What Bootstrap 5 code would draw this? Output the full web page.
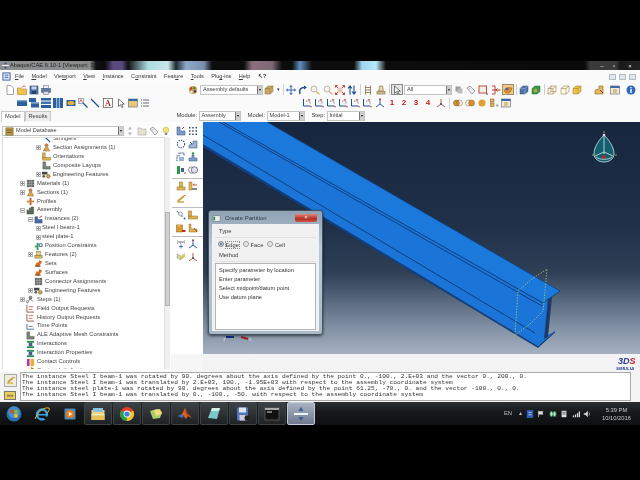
<!DOCTYPE html>
<html lang="en">
<head>
<meta charset="UTF-8">
<title>Abaqus/CAE</title>
<link rel="stylesheet" href="https://cdn.jsdelivr.net/npm/bootstrap@5.3.0/dist/css/bootstrap.min.css">
<style>
html, body { margin: 0; width: 640px; height: 480px; overflow: hidden; background: #000; }
.shot { width: 640px; height: 480px; font-family: "Liberation Sans", Arial, sans-serif; font-size: 5.8px; line-height: 1; color: #3a3a3a; filter: blur(.3px); }
.black-top { height: 61px; background: #000; }
.titlebar { height: 9px; padding-left: 2px; background: linear-gradient(90deg, #8f9091 0, #8a8b8c 90px, #101010 96px, #0b0b0b 105px, #5a4a80 113px, #5a4a80 122px, #111 128px, #a9dbe2 148px, #c9e6ea 168px, #1a2a30 176px, #8fa8c8 186px, #7a8fb0 204px, #0c0c0c 212px, #0c0c0c 244px, #8c6f7c 252px, #806a78 272px, #0c0c0c 282px, #0c0c0c 292px, #5f8fc0 300px, #0c0c0c 312px, #0c0c0c 354px, #9cd6f0 362px, #b8e6f8 376px, #0c0c0c 386px, #0a0a0a 585px, #3a3a3a 590px, #3a3a3a 616px, #1a1a1a 620px, #222 636px); color: #222; }
.titlebar .win-btn { width: 12px; color: #eee; text-align: center; font-size: 6px; }
.app-logo { width: 7px; height: 7px; margin-right: 1px; }
.menubar { height: 13px; background: #fbfbfb; padding-left: 2px; gap: 0; }
.menubar .mi { margin-right: 7.4px; font-size: 5.6px; }
.menubar .mi u { text-underline-offset: 1px; }
.mdi-btn { width: 7px; height: 6px; margin-left: 3px; background: #dfe6ee; border: 1px solid #b4bcc6; }
.tb-row { height: 13.5px; background: #fafafa; }
.slot { flex: 0 0 12px; width: 12px; height: 11px; display: flex; align-items: center; justify-content: center; }
.slot svg, .tree-ico svg { width: 10px; height: 10px; display: block; }
.slot.hot { background: #f5c98a; outline: 1px solid #9a8a70; outline-offset: -1px; }
.slot.boxed { background: #e3e3e3; outline: 1px solid #8a8a8a; outline-offset: -1px; }
.view-num { font-size: 8px; font-weight: 700; color: #c3201a; }
.tb-sep { flex: 0 0 4px; height: 11px; position: relative; }
.tb-sep::after { content: ""; display: block; width: 1px; height: 100%; margin: 0 auto; background: #cfcfcf; }
.dd { flex: 0 0 6px; text-align: center; font-size: 5px; color: #333; }
.ml1 { margin-left: 1px; }
.ml135 { margin-left: 135px; }
.ml150 { margin-left: 150px; }
.ml10 { margin-left: 10px; }
.ml4 { margin-left: 4px; }
.pl16 { padding-left: 16px; }
.combo { height: 10px; background: #fff; border: 1px solid #c4c4c4; padding-left: 2px; color: #444; font-size: 5.6px; }
.combo i { margin-left: auto; width: 5px; height: 100%; background: #cfcfcf; border-left: 1px solid #777; color: #111; font-style: normal; font-size: 4px; text-align: center; line-height: 8px; }
.w63 { width: 63px; flex: none; }
.w48 { width: 48px; flex: none; }
.w42 { width: 42px; flex: none; }
.w38 { width: 38px; flex: none; }
.w122 { width: 122px; flex: none; }
.row3 { height: 12px; background: #fafafa; align-items: flex-end; }
.tabbtn { height: 11px; padding: 2px 3px 0; border: 1px solid #c8c8c8; border-bottom: 0; background: #fff; font-size: 5.7px; }
.tabbtn.off { background: #ececec; margin-left: 0; height: 10px; }
.module-bar { margin-left: 125px; gap: 7px; height: 12px; align-items: center; }
.module-bar .lab { margin-right: 1.5px; font-size: 5.8px; }
.work { height: 250px; background: #f6f6f6; }
.left-panel { width: 171px; flex: none; padding: 3px 0 0 2px; background: #fdfdfd; }
.db-row { height: 12px; }
.tree-box { width: 162px; height: 232px; position: relative; overflow: hidden; background: #fff; border: 1px solid #dcdcdc; border-right: 0; border-bottom: 0; }
.tree-rows { margin: -3.5px 0 0; padding: 0; list-style: none; }
.tree-rows li { height: 8.93px; display: flex; align-items: center; white-space: nowrap; font-size: 5.8px; color: #444; }
.tree-ico { width: 9px; height: 9px; margin-right: 2px; flex: none; }
.tree-ico svg { width: 9px; height: 9px; }
.exp { width: 5px; height: 5px; margin-right: 1px; border: 1px solid #b5b5b5; flex: none; position: relative; background: #fff; }
.exp::before { content: ""; position: absolute; left: 0; right: 0; top: 1px; height: 1px; background: #888; }
.exp.plus::after { content: ""; position: absolute; top: 0; bottom: 0; left: 1px; width: 1px; background: #888; }
.no-exp { width: 6px; flex: none; }
.d0 { padding-left: 17px; }
.d1 { padding-left: 25px; }
.d2 { padding-left: 33px; }
.scroll-col { width: 6px; flex: none; background: #f0f0f0; border-left: 1px solid #ddd; }
.scroll-thumb { width: 100%; height: 94px; margin-top: 75px; background: #cfcfcf; border: 1px solid #b5b5b5; }
.palette { width: 32px; flex: none; padding: 2px 0 0 4px; background: #fff; height: 232px; }
.pal-grid { display: grid; grid-template-columns: 12px 12px; }
.pal-grid .slot { height: 13px; }
.pal-sep { grid-column: span 2; height: 3px; border-bottom: 1px solid #bdbdbd; margin-left: -3px; margin-right: -4px; }
.right-col { flex: 1; }
.viewport3d { height: 232px; position: relative; overflow: hidden; background: linear-gradient(180deg, #16263f 0, #1f3048 45%, #2e3f56 65%, #7f8ea2 88%, #a5b1c0 100%); }
.viewport3d > svg { display: block; }
.dlg { position: absolute; left: 5px; top: 88px; width: 115px; height: 125px; padding: 13px 3px 3px; background: linear-gradient(180deg, #8fa2b4, #b8c8d6 30%, #a8bac9); border: 1px solid #45525e; border-radius: 3px; box-shadow: 0 1px 3px rgba(0,0,0,.6); }
.dlg-title { position: absolute; left: 3px; top: 3px; right: 3px; height: 8px; color: #2e3a44; font-size: 6px; }
.dlg-close { position: absolute; right: 2px; top: 0; width: 22px; height: 8px; border-radius: 0 0 2px 2px; background: linear-gradient(180deg, #d98a80, #b92c20 60%, #c9564a); color: #fff; text-align: center; font-size: 6px; line-height: 7px; }
.dlg-body { height: 100%; background: #f1f1f1; padding: 3px; }
.legend-lab { height: 9px; padding-left: 4px; margin-top: 2px; font-size: 5.8px; border-bottom: 1px solid #e2e2e2; }
.radio-row { height: 13px; padding-left: 3px; gap: 4px; align-items: center; font-size: 5.8px; }
.rad { width: 6px; height: 6px; border-radius: 50%; border: 1px solid #9a9a9a; background: #e8e8e8; margin-right: 1.5px; flex: none; display: inline-block; }
.rad.on { background: #2e6c9e; box-shadow: inset 0 0 0 1px #dbe8f2; }
.focus-lab { outline: 1px dotted #888; }
.method-box { height: 67px; margin-top: 1px; padding: 2px 2px; background: #fff; border: 1px solid #b5b5b5; }
.method-box .list-group-item { padding: 0 0 0 1px; height: 9px; line-height: 9px; border: 0; background: transparent; color: #333; font-size: 5.7px; }
.strip { height: 18px; background: #f3f3f3; padding-right: 1px; }
.simulia { width: 26px; height: 17px; }
.msg-row { height: 30px; background: #f4f4f4; padding-left: 4px; }
.msg-icons { width: 16px; flex: none; }
.msg-i { width: 13px; height: 13px; margin-top: 2px; background: #efeedd; border: 1px solid #aaa; }
.msg-y { width: 12px; height: 9px; margin-top: 4px; background: #eccf5a; border: 1px solid #777; color: #333; font-size: 6px; line-height: 6px; text-align: center; }
.msg-box { width: 611px; height: 29px; flex: none; background: #fff; border: 1px solid #aaa; padding: 1px 0 0 1px; font-family: "Liberation Mono", "Courier New", monospace; font-size: 6.2px; line-height: 6.1px; color: #333; overflow: hidden; white-space: pre; }
.taskbar { height: 23px; background: linear-gradient(180deg, #2a2e31, #16191b 45%, #0d0f10); color: #ccc; }
.task-btn { width: 28px; height: 23px; margin-right: 1px; display: flex; align-items: center; justify-content: center; border: 1px solid #3e4347; border-radius: 2px; background: linear-gradient(180deg, #3d4246, #1f2224); }
.task-btn.active { background: linear-gradient(180deg, #a8b2c2, #6f7b8e); border-color: #c4ccd6; }
.task-plain { width: 28px; height: 23px; display: flex; align-items: center; justify-content: center; }
.task-btn svg, .task-plain svg { width: 16px; height: 16px; }
.tray { margin-left: auto; gap: 3.5px; padding-right: 9px; align-items: center; color: #bbb; }
.tray svg { width: 8px; height: 8px; }
.clock { text-align: center; font-size: 5.8px; line-height: 8px; color: #c8c8c8; margin-left: 7px; }
.lang { font-size: 5.8px; margin-right: 4px; }
.black-bot { height: 55px; background: #000; }
</style>
</head>
<body>
<svg width="0" height="0" class="d-block position-absolute">
<defs>
<symbol id="i-new" viewBox="0 0 10 10"><path d="M2 .5h4l2.500 2.500v6.500h-6.500z" fill="#fff" stroke="#8a8a8a" stroke-width=".8"/></symbol>
<symbol id="i-open" viewBox="0 0 10 10"><path d="M.5 3h3l1 1h5v5.500h-9z" fill="#f0c24e" stroke="#b5842a" stroke-width=".6"/><path d="M5 2.500c1-1.800 2.500-1.800 3.500-.8" fill="none" stroke="#d4502a" stroke-width="1"/></symbol>
<symbol id="i-save" viewBox="0 0 10 10"><rect x="1" y="1" width="8" height="8" fill="#4a6fa8" stroke="#2d4a78" stroke-width=".6"/><rect x="2.500" y="1.500" width="5" height="3" fill="#c8d4e6"/><rect x="3" y="6" width="4" height="3" fill="#25406c"/></symbol>
<symbol id="i-print" viewBox="0 0 10 10"><rect x="2.500" y=".5" width="5" height="3" fill="#eef" stroke="#667" stroke-width=".5"/><rect x=".5" y="3.500" width="9" height="4" fill="#5f78a6" stroke="#3c4f74" stroke-width=".5"/><rect x="2.500" y="6.500" width="5" height="3" fill="#dde" stroke="#667" stroke-width=".5"/></symbol>
<symbol id="i-paint" viewBox="0 0 10 10"><circle cx="5" cy="5" r="4" fill="#c8a050"/><circle cx="3" cy="3.500" r="1.200" fill="#d33"/><circle cx="6.500" cy="3" r="1.200" fill="#3a8a3a"/><circle cx="7" cy="6.500" r="1.200" fill="#336"/><circle cx="3.500" cy="7" r="1.200" fill="#eee"/></symbol>
<symbol id="i-cube" viewBox="0 0 10 10"><path d="M1 3.500l3-2.500h5v5.500l-3 2.500h-5z" fill="#c8a860" stroke="#8a7038" stroke-width=".5"/><path d="M1 3.500h5v5.500M6 3.500l3-2.500" fill="none" stroke="#8a7038" stroke-width=".5"/></symbol>
<symbol id="i-cubey" viewBox="0 0 10 10"><path d="M1 3.500l3-2.500h5v5.500l-3 2.500h-5z" fill="#edc24a" stroke="#9a7a20" stroke-width=".5"/><path d="M1 3.500h5v5.500M6 3.500l3-2.500" fill="none" stroke="#9a7a20" stroke-width=".5"/></symbol>
<symbol id="i-wire" viewBox="0 0 10 10"><path d="M1 3.500l3-2.500h5v5.500l-3 2.500h-5zM1 3.500h5v5.500M6 3.500l3-2.500M4 1v5.500h5M4 6.500l-3 2.500" fill="#fff8e8" stroke="#9a8450" stroke-width=".6"/></symbol>
<symbol id="i-box" viewBox="0 0 10 10"><path d="M1 3.500l3-2.500h5v5.500l-3 2.500h-5zM1 3.500h5v5.500M6 3.500l3-2.500" fill="#fff8e8" stroke="#9a8450" stroke-width=".6"/></symbol>
<symbol id="i-bcube" viewBox="0 0 10 10"><path d="M1 3.500l3-2.500h5v5.500l-3 2.500h-5z" fill="#4f74a8" stroke="#2d4a78" stroke-width=".5"/><path d="M1 3.500h5v5.500M6 3.500l3-2.500" fill="none" stroke="#a8bcd8" stroke-width=".5"/></symbol>
<symbol id="i-gcube" viewBox="0 0 10 10"><path d="M1 3.500l3-2.500h5v5.500l-3 2.500h-5z" fill="#3d9a4a" stroke="#206a2c" stroke-width=".5"/><circle cx="4.500" cy="5.500" r="1.800" fill="#c8a040"/></symbol>
<symbol id="i-move" viewBox="0 0 10 10"><path d="M5 .5v9M.5 5h9M5 .5l-1.300 1.600M5 .5l1.300 1.600M5 9.500l-1.300-1.600M5 9.500l1.300-1.600M.5 5l1.600-1.300M.5 5l1.600 1.300M9.500 5l-1.600-1.300M9.500 5l-1.600 1.300" fill="none" stroke="#2a5ea8" stroke-width=".9"/></symbol>
<symbol id="i-rot" viewBox="0 0 10 10"><path d="M2 9c-1.500-4 1-7 5-6.500" fill="none" stroke="#1f4e96" stroke-width="1.500"/><path d="M6 .5l3 2-3 2z" fill="#1f4e96"/></symbol>
<symbol id="i-mag" viewBox="0 0 10 10"><circle cx="4" cy="4" r="3" fill="#f6f1e2" stroke="#aaa" stroke-width=".8"/><path d="M6 6l3.500 3.500" stroke="#d6b878" stroke-width="1.500"/></symbol>
<symbol id="i-fit" viewBox="0 0 10 10"><rect x="2.500" y="2.500" width="5" height="5" fill="#e8c8b8"/><path d="M.5 .5l2.500 2.500M9.500 .5l-2.500 2.500M.5 9.500l2.500-2.500M9.500 9.500l-2.500-2.500M.5 .5h2M.5 .5v2M9.500 .5h-2M9.500 .5v2M.5 9.500h2M.5 9.500v-2M9.500 9.500h-2M9.500 9.500v-2" stroke="#c22a1a" fill="none" stroke-width=".9"/></symbol>
<symbol id="i-ud" viewBox="0 0 10 10"><path d="M3 9.500v-8M1 3.500l2-2.500 2 2.500M7 .5v8M5 6.500l2 2.500 2-2.500" stroke="#1f4e96" fill="none" stroke-width="1.100"/></symbol>
<symbol id="i-udg" viewBox="0 0 10 10"><path d="M5 .5l2 3H3zM5 9.500l2-3H3z" fill="#b5b5b5"/></symbol>
<symbol id="i-ladder" viewBox="0 0 10 10"><path d="M2.500 .5v9M7.500 .5v9M2.500 2.500h5M2.500 5h5M2.500 7.500h5" stroke="#8a7a50" stroke-width=".9" fill="none"/></symbol>
<symbol id="i-stamp" viewBox="0 0 10 10"><path d="M3.500 1h3l.8 5h-4.600z" fill="#e8d8b0" stroke="#8a7a50" stroke-width=".7"/><rect x="1" y="6.500" width="8" height="2.500" fill="#d0c090" stroke="#8a7a50" stroke-width=".7"/></symbol>
<symbol id="i-arrowbox" viewBox="0 0 10 10"><path d="M2.500 1v7.500l2-1.800 1.300 2.800 1.200-.6-1.300-2.700h2.600z" fill="#f2f2f2" stroke="#444" stroke-width=".7"/></symbol>
<symbol id="i-gray" viewBox="0 0 10 10"><rect x="1.500" y="1.500" width="5" height="5" fill="#999"/><rect x="3.500" y="3.500" width="5" height="5" fill="#bbb"/></symbol>
<symbol id="i-graypick" viewBox="0 0 10 10"><path d="M1 3l3-2 5 5-3 3z" fill="#eee" stroke="#888" stroke-width=".8"/><path d="M2.500 4.500l3-2 3 3" fill="none" stroke="#aaa" stroke-width=".6"/></symbol>
<symbol id="i-redbox" viewBox="0 0 10 10"><rect x="1" y="1" width="7.500" height="7" fill="#f7f2e8" stroke="#b93a2a" stroke-width=".9"/><circle cx="9" cy="9" r=".8" fill="#333"/></symbol>
<symbol id="i-redarr" viewBox="0 0 10 10"><path d="M1 1h3v8h-3M1 5h4M9 5h-3M5 5l1.500-1.500M5 5l1.500 1.500" stroke="#b92a1a" fill="none" stroke-width=".9"/><rect x="7.500" y="4" width="2" height="2" fill="#c8a050"/></symbol>
<symbol id="i-hot" viewBox="0 0 10 10"><path d="M1 6c1-3 4-4 8-3-1 2-1 5-4 5s-3-1-4-2z" fill="#e8902a" stroke="#8a5a1a" stroke-width=".6"/><circle cx="4" cy="4" r="1.500" fill="#3a6ab0"/></symbol>
<symbol id="i-info" viewBox="0 0 10 10"><circle cx="5" cy="5" r="4.500" fill="#2f68b8"/><rect x="4.300" y="4" width="1.400" height="4" fill="#fff"/><rect x="4.300" y="2" width="1.400" height="1.300" fill="#fff"/></symbol>
<symbol id="i-pen" viewBox="0 0 10 10"><path d="M1 9V5l4-1V1h4v8z" fill="#e0b860" stroke="#8a6a28" stroke-width=".6"/><path d="M6 5l3 3" stroke="#c22a1a"/></symbol>
<symbol id="i-table" viewBox="0 0 10 10"><rect x=".5" y="1" width="9" height="8" fill="#f0ead8" stroke="#6a7a8a" stroke-width=".7"/><rect x=".5" y="1" width="9" height="2" fill="#3a68a8"/><path d="M3 5h4M3 7h4" stroke="#b8902a" stroke-width=".9"/></symbol>
<symbol id="i-bars" viewBox="0 0 10 10"><rect x="0" y="2" width="10" height="6" fill="#2b5f9e"/><rect x="0" y="2" width="10" height="1.400" fill="#7da4d2"/></symbol>
<symbol id="i-bars2" viewBox="0 0 10 10"><rect x="0" y="0" width="7" height="4" fill="#2b5f9e"/><rect x="2" y="4.500" width="8" height="5" fill="#2b5f9e"/><rect x="2" y="4.500" width="8" height="1.200" fill="#7da4d2"/></symbol>
<symbol id="i-bars3" viewBox="0 0 10 10"><rect x="0" y="0" width="10" height="2.500" fill="#2b5f9e"/><rect x="0" y="3.500" width="10" height="2.500" fill="#3d74b4"/><rect x="0" y="7" width="10" height="3" fill="#2b5f9e"/></symbol>
<symbol id="i-bars4" viewBox="0 0 10 10"><rect x="0" y="0" width="3" height="10" fill="#2b5f9e"/><rect x="3.500" y="0" width="3" height="10" fill="#3d74b4"/><rect x="7" y="0" width="3" height="10" fill="#2b5f9e"/></symbol>
<symbol id="i-eye" viewBox="0 0 10 10"><rect x=".5" y="2" width="9" height="6" fill="#2b5f9e"/><ellipse cx="5" cy="5" rx="3.500" ry="2" fill="#e8b040"/></symbol>
<symbol id="i-magline" viewBox="0 0 10 10"><rect x=".5" y=".5" width="5" height="5" fill="#eee" stroke="#6a7a9a" stroke-width=".6"/><path d="M1.500 4.500l1.500-3 1.500 3" fill="none" stroke="#c22a1a" stroke-width=".6"/><path d="M5 5l4.500 4.500" stroke="#1f4e96" stroke-width="1.300"/></symbol>
<symbol id="i-line" viewBox="0 0 10 10"><path d="M1 1l8 8" stroke="#1f4e96" stroke-width="1.300"/></symbol>
<symbol id="i-Abox" viewBox="0 0 10 10"><rect x=".5" y=".5" width="9" height="9" fill="#fff" stroke="#555" stroke-width=".7"/><text x="5" y="8" text-anchor="middle" font-family="Liberation Serif, serif" font-size="8" font-weight="700" fill="#b3261a">A</text></symbol>
<symbol id="i-cur" viewBox="0 0 10 10"><path d="M2.500 1v7.500l2-1.800 1.300 2.800 1.200-.6-1.300-2.700h2.600z" fill="#fff" stroke="#444" stroke-width=".7"/></symbol>
<symbol id="i-pnl" viewBox="0 0 10 10"><rect x=".5" y="1" width="9" height="8" fill="#e8c87a" stroke="#5a6a7a" stroke-width=".6"/><rect x=".5" y="1" width="9" height="2" fill="#3a68a8"/></symbol>
<symbol id="i-dlg" viewBox="0 0 10 10"><rect x="1" y="2" width="8" height="6" fill="#eef2e8" stroke="#5a6a7a" stroke-width=".6"/><rect x="1.500" y="3" width="2" height="4" fill="#3a8a5a"/></symbol>
<symbol id="i-lines" viewBox="0 0 10 10"><path d="M3 2h6M3 5h6M3 8h6" stroke="#667" stroke-width="1"/><path d="M1 2h1M1 5h1M1 8h1" stroke="#2b5f9e" stroke-width="1"/></symbol>
<symbol id="i-xy" viewBox="0 0 10 10"><path d="M1.500 1v7h7" fill="none" stroke="#1f4e96" stroke-width="1"/><path d="M4 3h4v3" fill="none" stroke="#333" stroke-dasharray="1 .6" stroke-width=".6"/><path d="M6 1l1 1.500M8 1l-1 1.500" stroke="#c22a1a" stroke-width=".7"/><circle cx="9" cy="8.800" r=".7" fill="#c22a1a"/></symbol>
<symbol id="i-axis" viewBox="0 0 10 10"><path d="M5 1v5M5 6l-4 3M5 6l4 3" stroke="#2a5ea8" fill="none" stroke-width="1"/><circle cx="5" cy="1.200" r=".9" fill="#c22a1a"/></symbol>
<symbol id="i-axr" viewBox="0 0 10 10"><path d="M5 1v5M5 6l-4 3M5 6l4 3" stroke="#c25a3a" fill="none" stroke-width="1"/><circle cx="5" cy="6" r=".9" fill="#1f4e96"/></symbol>
<symbol id="i-ball2" viewBox="0 0 10 10"><circle cx="3.500" cy="5" r="3" fill="#d89030" stroke="#7a5a2a" stroke-width=".5"/><circle cx="6.500" cy="5" r="3" fill="none" stroke="#7a5a2a" stroke-width=".5"/></symbol>
<symbol id="i-ball3" viewBox="0 0 10 10"><circle cx="3.500" cy="5" r="3" fill="none" stroke="#7a5a2a" stroke-width=".5"/><circle cx="6.500" cy="5" r="3" fill="#d89030" stroke="#7a5a2a" stroke-width=".5"/></symbol>
<symbol id="i-ball" viewBox="0 0 10 10"><circle cx="5" cy="5" r="3.500" fill="#e0a030"/></symbol>
<symbol id="i-stack" viewBox="0 0 10 10"><rect x="1.500" y="1" width="3.500" height="3" fill="#e0b050" stroke="#7a5a2a" stroke-width=".5"/><rect x="1.500" y="5" width="3.500" height="3.500" fill="#e0b050" stroke="#7a5a2a" stroke-width=".5"/><rect x="7" y="6.500" width="2.500" height="2" fill="#aaa"/></symbol>
<symbol id="i-part" viewBox="0 0 10 10"><path d="M1 9V1h3v4h5v4z" fill="#7a9cc6" stroke="#44618c" stroke-width=".6"/><path d="M6 3l2-2" stroke="#c22a1a"/></symbol>
<symbol id="i-dots" viewBox="0 0 10 10"><g fill="#2f4a78"><rect x="1" y="1" width="1.500" height="1.500"/><rect x="4.200" y="1" width="1.500" height="1.500"/><rect x="7.500" y="1" width="1.500" height="1.500"/><rect x="1" y="4.200" width="1.500" height="1.500"/><rect x="4.200" y="4.200" width="1.500" height="1.500"/><rect x="7.500" y="4.200" width="1.500" height="1.500"/><rect x="1" y="7.500" width="1.500" height="1.500"/><rect x="4.200" y="7.500" width="1.500" height="1.500"/><rect x="7.500" y="7.500" width="1.500" height="1.500"/></g></symbol>
<symbol id="i-ring" viewBox="0 0 10 10"><circle cx="5" cy="5" r="3.700" fill="none" stroke="#2f4a78" stroke-width="1.100" stroke-dasharray="1.400 1"/></symbol>
<symbol id="i-blup" viewBox="0 0 10 10"><path d="M1 9V6l4-1V2h4v7z" fill="#9ab4d4" stroke="#44618c" stroke-width=".6"/><path d="M2 3l2 2" stroke="#1f4e96"/></symbol>
<symbol id="i-step" viewBox="0 0 10 10"><path d="M1 9V4h2V1h5v3" fill="none" stroke="#44618c" stroke-width="1.100" stroke-dasharray="1.500 .7"/><rect x="3" y="5" width="5" height="4" fill="#9ab4d4"/></symbol>
<symbol id="i-pin" viewBox="0 0 10 10"><path d="M1 9V6h3V3h2v3h3v3z" fill="#7a9cc6" stroke="#44618c" stroke-width=".6"/><circle cx="5" cy="1.500" r="1.300" fill="#2a9a4a"/></symbol>
<symbol id="i-green" viewBox="0 0 10 10"><rect x="1" y="1" width="3" height="8" fill="#2a9a4a"/><rect x="5" y="3" width="3" height="4" fill="#44618c"/><circle cx="9" cy="8" r=".8" fill="#c22a1a"/></symbol>
<symbol id="i-rings" viewBox="0 0 10 10"><circle cx="3.800" cy="5" r="3.200" fill="none" stroke="#667" stroke-width=".8"/><circle cx="6.500" cy="5" r="3.200" fill="#dde" stroke="#667" stroke-width=".8"/></symbol>
<symbol id="i-load" viewBox="0 0 10 10"><rect x="3.500" y="1" width="3" height="5" fill="#e0b850" stroke="#8a6a28" stroke-width=".5"/><rect x="1" y="6" width="8" height="3" fill="#e0b850" stroke="#8a6a28" stroke-width=".5"/></symbol>
<symbol id="i-loadr" viewBox="0 0 10 10"><rect x="1" y="1" width="3" height="8" fill="#e0b850" stroke="#8a6a28" stroke-width=".5"/><path d="M5 4h4M5 4l1.500-1.200" stroke="#c22a1a" fill="none" stroke-width=".8"/><rect x="4" y="7" width="5" height="2" fill="#888"/></symbol>
<symbol id="i-wand" viewBox="0 0 10 10"><rect x="1" y="7" width="7" height="2" fill="#d8c070"/><path d="M2 7l6-5" stroke="#c8a040" stroke-width="2"/><path d="M8.500 1l.8 1" stroke="#c22a1a"/></symbol>
<symbol id="i-lnk" viewBox="0 0 10 10"><path d="M1 1l6 6" stroke="#5a7a9a" stroke-width="1.200" stroke-dasharray="1.500 .6"/><circle cx="4.500" cy="4" r="2" fill="#eee" stroke="#667" stroke-width=".5"/><circle cx="8.500" cy="8.500" r=".9" fill="#2a5ea8"/></symbol>
<symbol id="i-org" viewBox="0 0 10 10"><rect x=".5" y="6" width="9" height="3" fill="#e0b050" stroke="#8a6a28" stroke-width=".5"/><rect x=".5" y="1" width="3" height="5" fill="#e0b050" stroke="#8a6a28" stroke-width=".5"/></symbol>
<symbol id="i-orgr" viewBox="0 0 10 10"><rect x=".5" y="2" width="6" height="7" fill="#d89a30" stroke="#8a5a28" stroke-width=".5"/><rect x="2" y="1" width="2" height="3" fill="#e0c060"/><rect x="6" y="7" width="3.500" height="2" fill="#c22a1a"/></symbol>
<symbol id="i-orgb" viewBox="0 0 10 10"><path d="M1 1h2v5h6v3H1z" fill="#e0b050" stroke="#8a6a28" stroke-width=".5"/><path d="M6 5l3 4" stroke="#c22a1a" stroke-width=".8"/></symbol>
<symbol id="i-ppp" viewBox="0 0 10 10"><text x="5" y="4" text-anchor="middle" font-size="3.600" font-family="Liberation Sans, sans-serif" fill="#333">(xyz)</text><path d="M5 5.500v4M3 7.500h4" stroke="#2a5ea8" stroke-width=".8"/></symbol>
<symbol id="i-datum" viewBox="0 0 10 10"><path d="M1 2l4 2 0 4-4-2z" fill="#cdd6a8" stroke="#333" stroke-width=".4" stroke-dasharray=".8 .5"/><path d="M5 4l4-3v4l-4 3z" fill="#d8c868"/></symbol>
<symbol id="i-folder" viewBox="0 0 10 10"><path d="M1 2h3l1 1h4v6H1z" fill="#e6e2d2" stroke="#aaa" stroke-width=".6"/></symbol>
<symbol id="i-bulb" viewBox="0 0 10 10"><circle cx="5" cy="4" r="2.800" fill="#f2e27a" stroke="#b8a030" stroke-width=".5"/><rect x="3.800" y="7" width="2.400" height="2" fill="#888"/></symbol>
<symbol id="i-dbcyl" viewBox="0 0 10 10"><rect x="1" y="1" width="8" height="8" fill="#c8a040" stroke="#6a5a28" stroke-width=".7"/><path d="M2 3.500h6M2 6h6" stroke="#333" stroke-width=".7"/></symbol>
<symbol id="i-pers" viewBox="0 0 10 10"><circle cx="5" cy="2.500" r="1.800" fill="#c98a3a" stroke="#6a3a1a" stroke-width=".4"/><path d="M1.500 9l2-4h3l2 4z" fill="#d8a84c" stroke="#6a3a1a" stroke-width=".4"/></symbol>
<symbol id="i-grid" viewBox="0 0 10 10"><rect x="1" y="1" width="8" height="8" fill="#666"/><path d="M1 3.700h8M1 6.300h8M3.700 1v8M6.300 1v8" stroke="#ccc" stroke-width=".5"/></symbol>
<symbol id="i-cross" viewBox="0 0 10 10"><rect x="4" y="1" width="2" height="8" fill="#b8552a"/><rect x="1" y="4" width="8" height="2" fill="#c98a3a"/></symbol>
<symbol id="i-fact" viewBox="0 0 10 10"><path d="M1 9V4l2.500 1.500V2l2 1V1h3v8z" fill="#5a6a5a" stroke="#2a3a2a" stroke-width=".4"/></symbol>
<symbol id="i-inst" viewBox="0 0 10 10"><path d="M1 9V2h3v3h5v4z" fill="#4a6aa8" stroke="#26406a" stroke-width=".5"/><path d="M6 3l3-2" stroke="#c22a1a"/></symbol>
<symbol id="i-greenp" viewBox="0 0 10 10"><path d="M3 1h2v8H3z" fill="#2a9a4a"/><path d="M6 2h3v3H6z" fill="none" stroke="#2f5f9e"/><path d="M1 5h2" stroke="#2a9a4a" stroke-width="2"/></symbol>
<symbol id="i-feat" viewBox="0 0 10 10"><rect x="1" y="6" width="8" height="3" fill="#d8b860" stroke="#6a5a28" stroke-width=".5"/><rect x="3" y="1.500" width="4" height="4.500" fill="#e8d080" stroke="#6a5a28" stroke-width=".5"/></symbol>
<symbol id="i-sets" viewBox="0 0 10 10"><path d="M1 8l2-4h2l1-3 3 2-2 3-1 3z" fill="#d86a1a"/><path d="M1 8h7" stroke="#333" stroke-width=".6"/></symbol>
<symbol id="i-eng" viewBox="0 0 10 10"><rect x="0" y="2" width="6" height="3" fill="#444"/><circle cx="2" cy="7" r="1.500" fill="#555"/><circle cx="7" cy="7" r="2" fill="#d8b040" stroke="#333" stroke-width=".5"/></symbol>
<symbol id="i-steps" viewBox="0 0 10 10"><circle cx="1.500" cy="7.500" r="1.200" fill="none" stroke="#333" stroke-width=".6"/><circle cx="5" cy="3" r="1.700" fill="#888" stroke="#333" stroke-width=".5"/><path d="M2.500 7l2-3M5 5l3 2" stroke="#555" stroke-width=".7"/></symbol>
<symbol id="i-hist" viewBox="0 0 10 10"><path d="M1 1v8h8" fill="none" stroke="#7a4a2a" stroke-width=".9"/><path d="M3 3h5M3 6h4" stroke="#c25a3a" stroke-width=".9"/></symbol>
<symbol id="i-time" viewBox="0 0 10 10"><path d="M1 2v6h8" fill="none" stroke="#2f5f9e" stroke-width=".9"/><path d="M3 5h4l1 1" fill="none" stroke="#555" stroke-width=".8"/></symbol>
<symbol id="i-ale" viewBox="0 0 10 10"><path d="M1 1v8h8V6H4V1z" fill="#7a8a7a" stroke="#333" stroke-width=".5"/></symbol>
<symbol id="i-inter" viewBox="0 0 10 10"><rect x="1" y="1" width="8" height="2" fill="#2a8a4a"/><rect x="1" y="7" width="8" height="2" fill="#2a8a4a"/><rect x="3" y="3" width="4" height="4" fill="#44618c"/></symbol>
<symbol id="i-ctrl" viewBox="0 0 10 10"><rect x="1" y="1" width="3" height="8" fill="#b83aa0"/><rect x="5" y="1" width="4" height="8" fill="#e0b040"/></symbol>
<symbol id="i-win" viewBox="0 0 16 16"><circle cx="8" cy="8" r="7.500" fill="#2a6eb0"/><circle cx="8" cy="6" r="6" fill="#6ba7d8" opacity=".5"/><rect x="4.500" y="4" width="3.200" height="3.500" fill="#e04a2a"/><rect x="8.300" y="4" width="3.200" height="3.500" fill="#7abf3a"/><rect x="4.500" y="8.100" width="3.200" height="3.500" fill="#3a9ae0"/><rect x="8.300" y="8.100" width="3.200" height="3.500" fill="#f2c42a"/></symbol>
<symbol id="i-ie" viewBox="0 0 16 16"><circle cx="8" cy="8.500" r="5" fill="none" stroke="#3aa0e8" stroke-width="2.300"/><rect x="4" y="8" width="9" height="1.500" fill="#3aa0e8"/><path d="M1 13C4 5 10 1 15 2c1 2-1 4-2 5" fill="none" stroke="#e8b82a" stroke-width="1"/><rect x="10" y="10.500" width="5" height="2.500" fill="#101214"/></symbol>
<symbol id="i-wmp" viewBox="0 0 16 16"><rect x="2.500" y="2.500" width="11" height="11" rx="1" fill="#4a88b8"/><circle cx="8" cy="8" r="4" fill="#f07a1a"/><path d="M6.800 5.800l3.400 2.200-3.400 2.200z" fill="#fff"/></symbol>
<symbol id="i-exp" viewBox="0 0 16 16"><path d="M1.500 4h13v10h-13z" fill="#f0d484"/><rect x="3" y="2" width="10" height="4" fill="#8ac0e0"/><rect x="1.500" y="8" width="13" height="1.500" fill="#e8f0c0"/><path d="M1.500 9.500h13v4.500h-13z" fill="#e8c05a"/></symbol>
<symbol id="i-chr" viewBox="0 0 16 16"><circle cx="8" cy="8" r="7" fill="#e0402a"/><path d="M8 8L1.900 4.500A7 7 0 0 0 8 15z" fill="#2aa04a"/><path d="M8 8l6.100-3.500A7 7 0 0 1 8 15z" fill="#f2c42a"/><circle cx="8" cy="8" r="3.400" fill="#fff"/><circle cx="8" cy="8" r="2.600" fill="#3a80e0"/></symbol>
<symbol id="i-stk" viewBox="0 0 16 16"><path d="M2 5l7-2 5 3-2 6-7 1z" fill="#a8cc6a"/><path d="M6 4l6-1 2 5-6 2z" fill="#f0dc7a"/></symbol>
<symbol id="i-mat" viewBox="0 0 16 16"><path d="M1 10l4-2 3-6 3 6 4 4-4-2-2 3-3-4z" fill="#e0601a"/><path d="M1 10l4-2 2 2-2 2z" fill="#3a70b8"/><path d="M8 2l3 6 1 3-3-4z" fill="#a82a1a"/></symbol>
<symbol id="i-note" viewBox="0 0 16 16"><path d="M2 12L6 2h8l-3 11z" fill="#7ac8c8"/><path d="M6 2h8l-1 3H5z" fill="#d0f0e8"/></symbol>
<symbol id="i-flop" viewBox="0 0 16 16"><rect x="2" y="1.500" width="11" height="13" fill="#4f74b8"/><rect x="4" y="1.500" width="7" height="5" fill="#dde6f0"/><rect x="4.500" y="9" width="6" height="5.500" fill="#ccd"/><circle cx="12" cy="12" r="2.500" fill="#222"/></symbol>
<symbol id="i-cmd" viewBox="0 0 16 16"><rect x="1" y="2" width="14" height="12" fill="#111" stroke="#666" stroke-width=".7"/><rect x="1" y="2" width="14" height="2" fill="#aaa"/><path d="M3 6h5" stroke="#ddd"/></symbol>
<symbol id="i-abq" viewBox="0 0 16 16"><path d="M1 8h14" stroke="#f0f4f8" stroke-width="2"/><path d="M8 1l2.500 4h-5zM8 15l2.500-4h-5z" fill="#3a5a9a"/></symbol>
<symbol id="i-flag" viewBox="0 0 10 10"><path d="M2 1v8" stroke="#ccc"/><path d="M2 1.500h6l-1 2 1 2H2z" fill="#ddd"/></symbol>
<symbol id="i-net" viewBox="0 0 10 10"><rect x="1" y="2" width="8" height="6" fill="#3a9a5a"/><path d="M3 2v6M7 2v6M1 5h8" stroke="#eee"/></symbol>
<symbol id="i-doc" viewBox="0 0 10 10"><rect x="2" y="1" width="6" height="8" fill="#ddd"/><path d="M3 3h4M3 5h4" stroke="#555"/></symbol>
<symbol id="i-sig" viewBox="0 0 10 10"><path d="M1 9h1.500V7H1zM3.500 9H5V5.500H3.500zM6 9h1.500V4H6zM8.300 9H10V2H8.300z" fill="#ddd"/></symbol>
<symbol id="i-vol" viewBox="0 0 10 10"><path d="M1 4h2l3-3v8L3 6H1z" fill="#ddd"/><path d="M7.500 3c1 1 1 3 0 4" stroke="#ddd" fill="none" stroke-width=".8"/></symbol>
<symbol id="i-tblue" viewBox="0 0 10 10"><rect x="1" y="0" width="8" height="10" fill="#2a5ab0"/><path d="M3 3h4M3 6h4" stroke="#cde"/></symbol>
</defs>
</svg>

<div class="shot d-flex flex-column">
  <div class="black-top"></div>

  <div class="titlebar d-flex align-items-center">
    <svg class="app-logo" viewBox="0 0 10 10"><path d="M0 5h10" stroke="#eef" stroke-width="1.500"/><path d="M5 0l2 3H3zM5 10l2-3H3z" fill="#33508a"/></svg>
    <span>Abaqus/CAE 6.10-1 [Viewport: 1]</span>
    <span class="win-btn ms-auto">–</span><span class="win-btn">▫</span><span class="win-btn ml4">×</span><span class="ml4"></span>
  </div>

  <div class="menubar d-flex align-items-center">
    <svg class="tree-ico me-1" viewBox="0 0 10 10"><rect x="1" y="1" width="8" height="8" fill="#dfe8f4" stroke="#335a9a"/><path d="M3 3.500h4M3 6h4" stroke="#335a9a"/></svg>
    <span class="mi"><u>F</u>ile</span><span class="mi"><u>M</u>odel</span><span class="mi">Vie<u>w</u>port</span><span class="mi"><u>V</u>iew</span><span class="mi"><u>I</u>nstance</span><span class="mi">C<u>o</u>nstraint</span><span class="mi">Feat<u>u</u>re</span><span class="mi"><u>T</u>ools</span><span class="mi">Plu<u>g</u>-ins</span><span class="mi"><u>H</u>elp</span><span class="mi fw-bold">↖?</span>
    <span class="mdi-btn ms-auto"></span><span class="mdi-btn"></span><span class="mdi-btn me-1"></span>
  </div>

  <div class="tb-row d-flex align-items-center ps-1">
    <span class="slot"><svg><use href="#i-new"/></svg></span>
    <span class="slot"><svg><use href="#i-open"/></svg></span>
    <span class="slot"><svg><use href="#i-save"/></svg></span>
    <span class="slot"><svg><use href="#i-print"/></svg></span>
    <span class="slot ml135"><svg><use href="#i-paint"/></svg></span>
    <div class="combo w63 ml1 d-flex align-items-center">Assembly defaults<i>▾</i></div>
    <span class="slot"><svg><use href="#i-cube"/></svg></span>
    <span class="dd">▾</span>
    <span class="tb-sep"></span>
    <span class="slot"><svg><use href="#i-move"/></svg></span>
    <span class="slot"><svg><use href="#i-rot"/></svg></span>
    <span class="slot"><svg><use href="#i-mag"/></svg></span>
    <span class="slot ml1"><svg><use href="#i-mag"/></svg></span>
    <span class="slot"><svg><use href="#i-fit"/></svg></span>
    <span class="slot"><svg><use href="#i-ud"/></svg></span>
    <span class="tb-sep"></span>
    <span class="slot"><svg><use href="#i-ladder"/></svg></span>
    <span class="slot ml1"><svg><use href="#i-stamp"/></svg></span>
    <span class="tb-sep"></span>
    <span class="slot boxed"><svg><use href="#i-arrowbox"/></svg></span>
    <div class="combo w48 ml1 d-flex align-items-center">All<i>▾</i></div>
    <span class="slot ml1"><svg><use href="#i-gray"/></svg></span>
    <span class="slot"><svg><use href="#i-graypick"/></svg></span>
    <span class="slot"><svg><use href="#i-redbox"/></svg></span>
    <span class="slot ml1"><svg><use href="#i-redarr"/></svg></span>
    <span class="slot hot"><svg><use href="#i-hot"/></svg></span>
    <span class="tb-sep"></span>
    <span class="slot"><svg><use href="#i-bcube"/></svg></span>
    <span class="slot"><svg><use href="#i-gcube"/></svg></span>
    <span class="tb-sep"></span>
    <span class="slot"><svg><use href="#i-wire"/></svg></span>
    <span class="slot ml1"><svg><use href="#i-box"/></svg></span>
    <span class="slot"><svg><use href="#i-cubey"/></svg></span>
    <span class="slot ml10"><svg><use href="#i-pen"/></svg></span>
    <span class="slot ml4"><svg><use href="#i-table"/></svg></span>
    <span class="slot ml4"><svg><use href="#i-info"/></svg></span>
  </div>

  <div class="tb-row d-flex align-items-center pl16">
    <span class="slot"><svg><use href="#i-bars"/></svg></span>
    <span class="slot"><svg><use href="#i-bars2"/></svg></span>
    <span class="slot"><svg><use href="#i-bars3"/></svg></span>
    <span class="slot"><svg><use href="#i-bars4"/></svg></span>
    <span class="slot ml1"><svg><use href="#i-eye"/></svg></span>
    <span class="slot"><svg><use href="#i-magline"/></svg></span>
    <span class="slot"><svg><use href="#i-line"/></svg></span>
    <span class="slot ml1"><svg><use href="#i-Abox"/></svg></span>
    <span class="slot ml1"><svg><use href="#i-cur"/></svg></span>
    <span class="slot"><svg><use href="#i-pnl"/></svg></span>
    <span class="slot"><svg><use href="#i-lines"/></svg></span>
    <span class="slot ml150"><svg><use href="#i-xy"/></svg></span>
    <span class="slot"><svg><use href="#i-xy"/></svg></span>
    <span class="slot"><svg><use href="#i-xy"/></svg></span>
    <span class="slot"><svg><use href="#i-xy"/></svg></span>
    <span class="slot"><svg><use href="#i-xy"/></svg></span>
    <span class="slot"><svg><use href="#i-xy"/></svg></span>
    <span class="slot ml1"><svg><use href="#i-axis"/></svg></span>
    <span class="slot view-num">1</span>
    <span class="slot view-num">2</span>
    <span class="slot view-num">3</span>
    <span class="slot view-num">4</span>
    <span class="slot ml1"><svg><use href="#i-axr"/></svg></span>
    <span class="tb-sep"></span>
    <span class="slot ml1"><svg><use href="#i-ball2"/></svg></span>
    <span class="slot"><svg><use href="#i-ball3"/></svg></span>
    <span class="slot"><svg><use href="#i-ball"/></svg></span>
    <span class="slot"><svg><use href="#i-stack"/></svg></span>
    <span class="slot"><svg><use href="#i-table"/></svg></span>
  </div>

  <div class="row3 d-flex">
    <div class="d-flex">
      <span class="tabbtn ml1">Model</span><span class="tabbtn off">Results</span>
    </div>
    <div class="module-bar d-flex">
      <div class="d-flex align-items-center"><span class="lab">Module:</span><div class="combo w42 d-flex align-items-center">Assembly<i>▾</i></div></div>
      <div class="d-flex align-items-center"><span class="lab">Model:</span><div class="combo w38 d-flex align-items-center">Model-1<i>▾</i></div></div>
      <div class="d-flex align-items-center"><span class="lab">Step:</span><div class="combo w38 d-flex align-items-center">Initial<i>▾</i></div></div>
    </div>
  </div>

  <div class="work d-flex">
    <div class="left-panel">
      <div class="db-row d-flex align-items-center">
        <div class="combo w122 d-flex align-items-center"><span class="tree-ico"><svg><use href="#i-dbcyl"/></svg></span>Model Database<i>▾</i></div>
        <span class="slot"><svg><use href="#i-udg"/></svg></span>
        <span class="slot"><svg><use href="#i-folder"/></svg></span>
        <span class="slot"><svg><use href="#i-graypick"/></svg></span>
        <span class="slot"><svg><use href="#i-bulb"/></svg></span>
      </div>
      <div class="d-flex">
        <div class="tree-box">
          <ul class="tree-rows">
            <li class="d2"><span class="no-exp"></span><span class="tree-ico"><svg><use href="#i-line"/></svg></span>Stringers</li>
            <li class="d2"><span class="exp plus"></span><span class="tree-ico"><svg><use href="#i-pers"/></svg></span>Section Assignments (1)</li>
            <li class="d2"><span class="no-exp"></span><span class="tree-ico"><svg><use href="#i-org"/></svg></span>Orientations</li>
            <li class="d2"><span class="no-exp"></span><span class="tree-ico"><svg><use href="#i-ale"/></svg></span>Composite Layups</li>
            <li class="d2"><span class="exp plus"></span><span class="tree-ico"><svg><use href="#i-eng"/></svg></span>Engineering Features</li>
            <li class="d0"><span class="exp plus"></span><span class="tree-ico"><svg><use href="#i-grid"/></svg></span>Materials (1)</li>
            <li class="d0"><span class="exp plus"></span><span class="tree-ico"><svg><use href="#i-pers"/></svg></span>Sections (1)</li>
            <li class="d0"><span class="no-exp"></span><span class="tree-ico"><svg><use href="#i-cross"/></svg></span>Profiles</li>
            <li class="d0"><span class="exp"></span><span class="tree-ico"><svg><use href="#i-fact"/></svg></span>Assembly</li>
            <li class="d1"><span class="exp"></span><span class="tree-ico"><svg><use href="#i-inst"/></svg></span>Instances (2)</li>
            <li class="d2"><span class="exp plus"></span>Steel I beam-1</li>
            <li class="d2"><span class="exp plus"></span>steel plate-1</li>
            <li class="d1"><span class="no-exp"></span><span class="tree-ico"><svg><use href="#i-greenp"/></svg></span>Position Constraints</li>
            <li class="d1"><span class="exp plus"></span><span class="tree-ico"><svg><use href="#i-feat"/></svg></span>Features (2)</li>
            <li class="d1"><span class="no-exp"></span><span class="tree-ico"><svg><use href="#i-sets"/></svg></span>Sets</li>
            <li class="d1"><span class="no-exp"></span><span class="tree-ico"><svg><use href="#i-sets"/></svg></span>Surfaces</li>
            <li class="d1"><span class="no-exp"></span><span class="tree-ico"><svg><use href="#i-grid"/></svg></span>Connector Assignments</li>
            <li class="d1"><span class="exp plus"></span><span class="tree-ico"><svg><use href="#i-eng"/></svg></span>Engineering Features</li>
            <li class="d0"><span class="exp plus"></span><span class="tree-ico"><svg><use href="#i-steps"/></svg></span>Steps (1)</li>
            <li class="d0"><span class="no-exp"></span><span class="tree-ico"><svg><use href="#i-hist"/></svg></span>Field Output Requests</li>
            <li class="d0"><span class="no-exp"></span><span class="tree-ico"><svg><use href="#i-hist"/></svg></span>History Output Requests</li>
            <li class="d0"><span class="no-exp"></span><span class="tree-ico"><svg><use href="#i-time"/></svg></span>Time Points</li>
            <li class="d0"><span class="no-exp"></span><span class="tree-ico"><svg><use href="#i-ale"/></svg></span>ALE Adaptive Mesh Constraints</li>
            <li class="d0"><span class="no-exp"></span><span class="tree-ico"><svg><use href="#i-inter"/></svg></span>Interactions</li>
            <li class="d0"><span class="no-exp"></span><span class="tree-ico"><svg><use href="#i-inter"/></svg></span>Interaction Properties</li>
            <li class="d0"><span class="no-exp"></span><span class="tree-ico"><svg><use href="#i-ctrl"/></svg></span>Contact Controls</li>
            <li class="d0"><span class="no-exp"></span><span class="tree-ico"><svg><use href="#i-sets"/></svg></span>Contact Initializations</li>
          </ul>
        </div>
        <div class="scroll-col"><div class="scroll-thumb"></div></div>
      </div>
    </div>

    <div class="palette">
      <div class="pal-grid">
        <span class="slot"><svg><use href="#i-part"/></svg></span><span class="slot"><svg><use href="#i-dots"/></svg></span>
        <span class="slot"><svg><use href="#i-ring"/></svg></span><span class="slot"><svg><use href="#i-blup"/></svg></span>
        <span class="slot"><svg><use href="#i-step"/></svg></span><span class="slot"><svg><use href="#i-pin"/></svg></span>
        <span class="slot"><svg><use href="#i-green"/></svg></span><span class="slot"><svg><use href="#i-rings"/></svg></span>
        <span class="pal-sep"></span>
        <span class="slot"><svg><use href="#i-load"/></svg></span><span class="slot"><svg><use href="#i-loadr"/></svg></span>
        <span class="slot"><svg><use href="#i-wand"/></svg></span><span></span>
        <span class="pal-sep"></span>
        <span class="slot"><svg><use href="#i-lnk"/></svg></span><span class="slot"><svg><use href="#i-org"/></svg></span>
        <span class="slot"><svg><use href="#i-orgr"/></svg></span><span class="slot"><svg><use href="#i-orgb"/></svg></span>
        <span class="pal-sep"></span>
        <span class="slot"><svg><use href="#i-ppp"/></svg></span><span class="slot"><svg><use href="#i-axis"/></svg></span>
        <span class="slot"><svg><use href="#i-datum"/></svg></span><span class="slot"><svg><use href="#i-axr"/></svg></span>
      </div>
    </div>

    <div class="right-col d-flex flex-column">
      <div class="viewport3d">
        <svg width="437" height="232" viewBox="203 123 437 232">
          <polygon points="203,123 267,123 560,292 549,300 546,337 555,332 538,347 203,146" fill="#1b75d8"/>
          <polygon points="220,123 267,123 560,292 543,304" fill="#1c79dc"/>
          <polyline points="223,123 543,304" fill="none" stroke="#0f3f7c" stroke-width="1"/>
          <polyline points="219,123 542,307" fill="none" stroke="#0f3f7c" stroke-width="1"/>
          <polyline points="267,123 560,292 543,304" fill="none" stroke="#123f78" stroke-width=".8"/>
          <polyline points="203,136 535,334" fill="none" stroke="#0f3f7c" stroke-width="1"/>
          <polygon points="203,145 538,347 555,332 555,333.500 538,349 203,148" fill="#113f80"/>
          <polygon points="548,300 552,298 548,338 544,340" fill="#1b3a66"/>
          <polyline points="515,336 518,292 532,280 547,270 545,293 543,312 530,325 515,336" fill="none" stroke="#b6d67a" stroke-width=".8" stroke-dasharray="1.300 1.500"/>
          <path d="M604 136c5 5 10 12 10 19 0 5-5 8-10 8s-10-3-10-8c0-7 5-14 10-19z" fill="#13606c" stroke="#d7e6ee" stroke-width=".8"/>
          <path d="M604 136v19M595 157l9-4 9 4M596 158c3 3 13 3 16 0" fill="none" stroke="#d7e6ee" stroke-width=".8"/>
          <circle cx="604" cy="136" r="1.300" fill="#e8d8f0"/>
          <circle cx="604" cy="158" r="1.700" fill="#e01a1a"/>
          <circle cx="604" cy="133" r=".7" fill="#b8c860"/><circle cx="593" cy="156" r=".7" fill="#b8c860"/><circle cx="616" cy="156" r=".7" fill="#b8c860"/>
          <path d="M226 338h8" stroke="#1b2f90" stroke-width="2"/>
          <path d="M241 338l7 2" stroke="#9a2020" stroke-width="2"/>
          <text x="223" y="342" font-size="5" fill="#dde" font-family="Liberation Sans, sans-serif">z</text>
          <text x="249" y="342" font-size="5" fill="#dde" font-family="Liberation Sans, sans-serif">x</text>
          <path d="M257 247v8l2-2 1.500 3 1-.5-1.500-3h2.500z" fill="#ddd" stroke="#333" stroke-width=".5"/>
        </svg>
        <div class="dlg">
          <div class="dlg-title d-flex align-items-center"><span class="tree-ico me-1"><svg><use href="#i-dlg"/></svg></span>Create Partition<span class="dlg-close">×</span></div>
          <div class="dlg-body">
            <div class="legend-lab">Type</div>
            <div class="radio-row d-flex">
              <span><span class="rad on"></span><span class="focus-lab">Edge</span></span>
              <span><span class="rad"></span>Face</span>
              <span><span class="rad"></span>Cell</span>
            </div>
            <div class="legend-lab">Method</div>
            <div class="method-box list-group list-group-flush">
              <div class="list-group-item">Specify parameter by location</div>
              <div class="list-group-item">Enter parameter</div>
              <div class="list-group-item">Select midpoint/datum point</div>
              <div class="list-group-item">Use datum plane</div>
            </div>
          </div>
        </div>
      </div>
      <div class="strip d-flex justify-content-end align-items-center">
        <svg class="simulia" viewBox="0 0 26 17"><text x="5" y="9" font-size="9" font-style="italic" font-family="Liberation Sans, sans-serif"><tspan fill="#2a3a9a" font-weight="700">3D</tspan><tspan fill="#c8202a" font-weight="700">S</tspan></text><text x="3" y="15" font-size="4.400" font-style="italic" font-weight="700" fill="#2a3a9a" font-family="Liberation Sans, sans-serif">SIMULIA</text></svg>
      </div>
    </div>
  </div>

  <div class="msg-row d-flex">
    <div class="msg-icons d-flex flex-column">
      <div class="msg-i d-flex align-items-center justify-content-center"><span class="tree-ico m-0"><svg><use href="#i-wand"/></svg></span></div>
      <div class="msg-y">»»</div>
    </div>
    <div class="msg-box">The instance Steel I beam-1 was rotated by 90. degrees about the axis defined by the point 0., -100., 2.E+03 and the vector 0., 200., 0.
The instance Steel I beam-1 was translated by 2.E+03, 100., -1.95E+03 with respect to the assembly coordinate system
The instance steel plate-1 was rotated by 90. degrees about the axis defined by the point 61.25, -70., 0. and the vector -100., 0., 0.
The instance Steel I beam-1 was translated by 0., -100., -50. with respect to the assembly coordinate system</div>
  </div>

  <div class="taskbar d-flex align-items-center">
    <span class="task-plain"><svg><use href="#i-win"/></svg></span>
    <span class="task-plain"><svg><use href="#i-ie"/></svg></span>
    <span class="task-plain"><svg><use href="#i-wmp"/></svg></span>
    <span class="task-btn"><svg><use href="#i-exp"/></svg></span>
    <span class="task-btn"><svg><use href="#i-chr"/></svg></span>
    <span class="task-btn"><svg><use href="#i-stk"/></svg></span>
    <span class="task-btn"><svg><use href="#i-mat"/></svg></span>
    <span class="task-btn"><svg><use href="#i-note"/></svg></span>
    <span class="task-btn"><svg><use href="#i-flop"/></svg></span>
    <span class="task-btn"><svg><use href="#i-cmd"/></svg></span>
    <span class="task-btn active"><svg><use href="#i-abq"/></svg></span>
    <div class="tray d-flex">
      <span class="lang">EN</span>
      <span>▴</span>
      <svg><use href="#i-tblue"/></svg>
      <svg><use href="#i-flag"/></svg>
      <svg><use href="#i-net"/></svg>
      <svg><use href="#i-doc"/></svg>
      <svg><use href="#i-sig"/></svg>
      <svg><use href="#i-vol"/></svg>
      <div class="clock">5:39 PM<br>10/10/2016</div>
    </div>
  </div>
  <div class="black-bot"></div>
</div>
<script src="https://cdn.jsdelivr.net/npm/bootstrap@5.3.0/dist/js/bootstrap.bundle.min.js"></script>
</body>
</html>
